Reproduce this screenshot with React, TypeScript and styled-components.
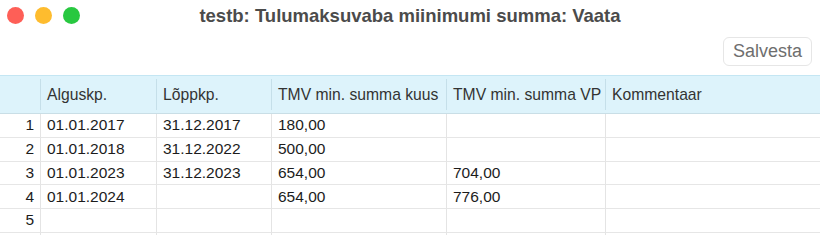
import * as React from 'react';
import styled, { createGlobalStyle } from 'styled-components';

interface Row {
    start: string;
    end: string;
    monthly: string;
    vp: string;
    comment: string;
}

const rows: Row[] = [
    { start: '01.01.2017', end: '31.12.2017', monthly: '180,00', vp: '', comment: '' },
    { start: '01.01.2018', end: '31.12.2022', monthly: '500,00', vp: '', comment: '' },
    { start: '01.01.2023', end: '31.12.2023', monthly: '654,00', vp: '704,00', comment: '' },
    { start: '01.01.2024', end: '', monthly: '654,00', vp: '776,00', comment: '' },
    { start: '', end: '', monthly: '', vp: '', comment: '' },
    { start: '', end: '', monthly: '', vp: '', comment: '' },
];

const columns = ['Alguskp.', 'Lõppkp.', 'TMV min. summa kuus', 'TMV min. summa VP', 'Kommentaar'];

export default function App() {
    return <>
        <GlobalStyle />
        <Window>
            <TitleBar>
                <Lights>
                    <Light color="#fe5f57" />
                    <Light color="#febc2e" />
                    <Light color="#28c840" />
                </Lights>
                <Title>testb: Tulumaksuvaba miinimumi summa: Vaata</Title>
            </TitleBar>
            <Toolbar>
                <SaveButton>Salvesta</SaveButton>
            </Toolbar>
            <Grid>
                <HeaderCell />
                {columns.map(c => <HeaderCell key={c}><HeaderLabel>{c}</HeaderLabel></HeaderCell>)}
                {rows.map((r, i) => (
                    <React.Fragment key={i}>
                        <NumCell>{i < 5 ? i + 1 : ''}</NumCell>
                        <Cell>{r.start}</Cell>
                        <Cell>{r.end}</Cell>
                        <Cell>{r.monthly}</Cell>
                        <Cell>{r.vp}</Cell>
                        <Cell>{r.comment}</Cell>
                    </React.Fragment>
                ))}
            </Grid>
        </Window>
    </>
}

const GlobalStyle = createGlobalStyle`
html, body {
margin: 0;
padding: 0;
background: #ffffff;
}
body {
font-family: "Liberation Sans", Arial, sans-serif;
}
`

const Window = styled.div`
width: 820px;
height: 235px;
overflow: hidden;
background: #ffffff;
display: flex;
flex-direction: column;
`

const TitleBar = styled.div`
flex-shrink: 0;
height: 31px;
display: flex;
align-items: center;
justify-content: center;
position: relative;
`

const Lights = styled.div`
position: absolute;
left: 7px;
top: 7px;
display: flex;
gap: 11px;
`

const Light = styled.div<{ color: string }>`
width: 17px;
height: 17px;
border-radius: 50%;
background: ${p => p.color};
`

const Title = styled.div`
font-family: "Liberation Sans", Arial, sans-serif;
font-weight: bold;
font-size: 18.5px;
color: #4b4b4b;
`

const Toolbar = styled.div`
flex-shrink: 0;
height: 44px;
display: flex;
justify-content: flex-end;
align-items: flex-start;
padding: 6px 8px 0 0;
box-sizing: border-box;
`

const SaveButton = styled.button`
width: 89px;
height: 29px;
border: 1px solid #e6e6e6;
border-radius: 6px;
background: #ffffff;
color: #6e6e6e;
font-family: "Liberation Sans", Arial, sans-serif;
font-size: 18px;
padding: 0;
`

const Grid = styled.div`
flex-shrink: 0;
display: grid;
grid-template-columns: 40px 116px 115px 175px 159px 1fr;
grid-template-rows: 38px;
grid-auto-rows: 23.75px;
border-top: 1px solid #c4e6f3;
`

const HeaderCell = styled.div`
background: #ddf3fb;
border-bottom: 1px solid #c9dee6;
display: flex;
align-items: center;
box-sizing: border-box;
`

const HeaderLabel = styled.div`
flex: 1;
height: 31px;
display: flex;
align-items: center;
border-left: 1px solid #c5dfe9;
padding-left: 6px;
font-size: 15.7px;
color: #333333;
white-space: nowrap;
`

const Cell = styled.div`
border-left: 1px solid #e4e4e4;
border-bottom: 1px solid #e6e6e6;
box-sizing: border-box;
padding-left: 6px;
display: flex;
align-items: center;
font-size: 15.5px;
color: #1c1c1c;
white-space: nowrap;
`

const NumCell = styled.div`
border-bottom: 1px solid #e6e6e6;
box-sizing: border-box;
padding-right: 6px;
display: flex;
align-items: center;
justify-content: flex-end;
font-size: 15.5px;
color: #1c1c1c;
`
